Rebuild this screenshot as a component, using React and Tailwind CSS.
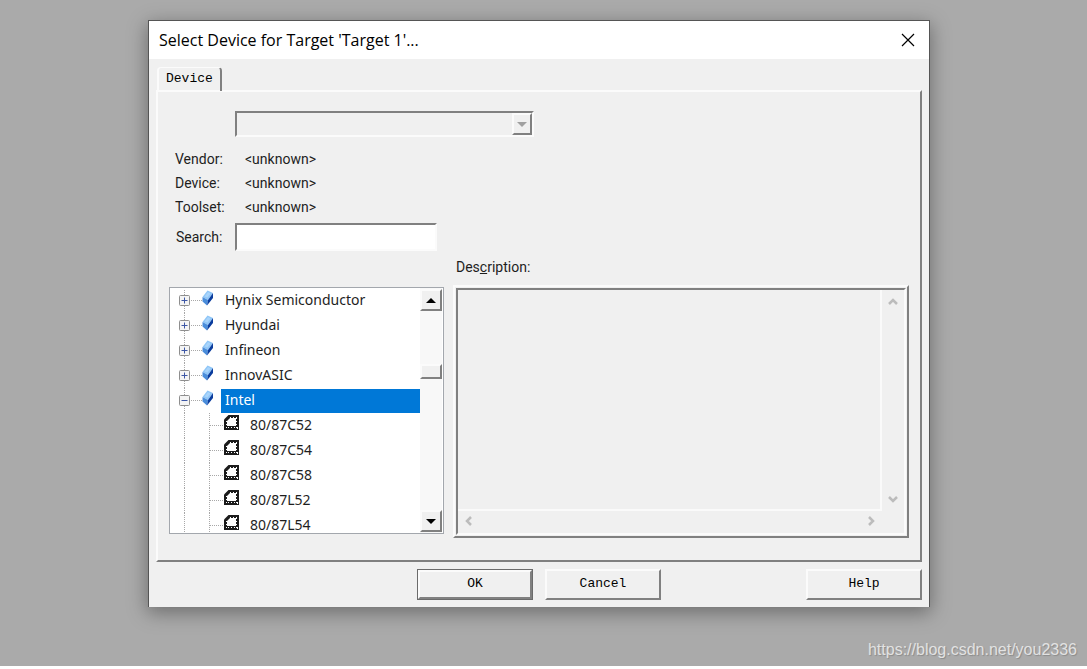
import React, { useState } from "react";

const vendors = [
  { name: "Hynix Semiconductor" },
  { name: "Hyundai" },
  { name: "Infineon" },
  { name: "InnovASIC" },
  { name: "Intel", devices: ["80/87C52", "80/87C54", "80/87C58", "80/87L52", "80/87L54"] },
];

const info = [
  { label: "Vendor:", value: "<unknown>" },
  { label: "Device:", value: "<unknown>" },
  { label: "Toolset:", value: "<unknown>" },
];

const raised =
  "border-2 border-t-[#fbfbfb] border-l-[#fbfbfb] border-r-[#808080] border-b-[#808080]";
const sunken =
  "border-2 border-t-[#808080] border-l-[#808080] border-r-[#fbfbfb] border-b-[#fbfbfb]";

const VendorGutter = ({ first, open }) => (
  <svg width="51" height="25" className="shrink-0" aria-hidden="true">
    <g stroke="#a8a8a8" strokeDasharray="1 1" shapeRendering="crispEdges">
      <path d={first ? "M14.5 2V25" : "M14.5 0V25"} />
      <path d="M21 12.5H32" />
    </g>
    <rect x="9.5" y="7.5" width="10" height="10" rx="1" fill="#f4f4f4" stroke="#8e8e8e" />
    <path d={open ? "M11.5 12.5H17.5" : "M11.5 12.5H17.5M14.5 9.5V15.5"} stroke="#3c56a5" />
    {/* blue component block */}
    <path d="M32.5 9L37.5 2.5L43 5L38 12Z" fill="#8fc6f7" />
    <path d="M32.5 9L38 12L37 17.5L32.5 13.5Z" fill="#4a8ddb" />
    <path d="M43 5V10L37 17.5L38 12Z" fill="#0b3d9e" />
    <path d="M34.5 8.5L38 4L40.5 5.5L37.5 9.5Z" fill="#a9d4fb" />
  </svg>
);

const DeviceGutter = () => (
  <svg width="76" height="25" className="shrink-0" aria-hidden="true">
    <g stroke="#a8a8a8" strokeDasharray="1 1" shapeRendering="crispEdges">
      <path d="M14.5 0V25" />
      <path d="M39.5 0V25" />
      <path d="M40 12.5H53" />
    </g>
    {/* PLCC chip with pins */}
    <path d="M58.5 2H69V17H54V6.5Z" fill="#1c1c1c" />
    <path d="M60 5H66V13H57V8Z" fill="#fff" />
    <g stroke="#fff" strokeDasharray="1 2" shapeRendering="crispEdges">
      <path d="M60 4.5H68" />
      <path d="M58 14.5H68" />
      <path d="M56.5 8V15" />
      <path d="M66.5 5V15" />
    </g>
    <path d="M67 15H68V16H67Z" fill="#fff" />
  </svg>
);

const Arrow = ({ up, color = "#000" }) => (
  <svg width="10" height="5" aria-hidden="true">
    <path d={up ? "M0 5L5 0L10 5Z" : "M0 0H10L5 5Z"} fill={color} />
  </svg>
);

const Chevron = ({ d }) => (
  <svg width="10" height="10" aria-hidden="true">
    <path d={d} fill="none" stroke="#bcbcbc" strokeWidth="2.5" />
  </svg>
);

const DeviceTree = () => {
  const [selected, setSelected] = useState("Intel");
  const [open, setOpen] = useState(true);

  const itemClass = (name) =>
    `mt-px h-6 flex-1 pl-1 pb-0.5 text-left leading-[22px] ${
      selected === name ? "bg-[#0078d7] text-white" : "text-[#1e1e1e]"
    }`;

  return (
    <div className="flex h-[247px] border border-[#a3a7ad] bg-white pr-px font-['Noto_Sans','Open_Sans',sans-serif] text-[14px]">
      <ul className="min-w-0 flex-1 overflow-hidden">
        {vendors.map((vendor, i) => (
          <li key={vendor.name}>
            <div className="flex h-[25px]">
              <VendorGutter first={i === 0} open={vendor.devices && open} />
              <button
                type="button"
                className={itemClass(vendor.name)}
                onClick={() => setSelected(vendor.name)}
                onDoubleClick={() => vendor.devices && setOpen(!open)}
              >
                {vendor.name}
              </button>
            </div>
            {vendor.devices && open && (
              <ul>
                {vendor.devices.map((device) => (
                  <li key={device} className="flex h-[25px]">
                    <DeviceGutter />
                    <button
                      type="button"
                      className={itemClass(device)}
                      onClick={() => setSelected(device)}
                    >
                      {device}
                    </button>
                  </li>
                ))}
              </ul>
            )}
          </li>
        ))}
      </ul>
      <div className="flex w-[22px] flex-col bg-[#f8f8f8] py-px">
        <button type="button" aria-label="Scroll up" className={`flex h-[22px] items-center justify-center bg-[#f0f0f0] ${raised}`}>
          <Arrow up />
        </button>
        <div className="h-[53px]" />
        <div className={`h-[15px] bg-[#f0f0f0] ${raised}`} />
        <button type="button" aria-label="Scroll down" className={`mt-auto flex h-[22px] items-center justify-center bg-[#f0f0f0] ${raised}`}>
          <Arrow />
        </button>
      </div>
    </div>
  );
};

const DialogButton = ({ children, isDefault }) => (
  <button
    type="button"
    className={`h-[31px] w-[116px] font-['Liberation_Mono',monospace] text-[13px] text-black ${
      isDefault ? "border border-[#6b6b6b]" : ""
    }`}
  >
    <span className={`flex h-full items-center justify-center pb-px ${raised}`}>{children}</span>
  </button>
);

const App = () => {
  const [search, setSearch] = useState("");

  return (
    <div className="flex min-h-screen flex-col border-b-[3px] border-white bg-[#aaaaaa] pt-5 font-['Roboto','Liberation_Sans',sans-serif] text-[14px] text-[#1e1e1e]">
      <div
        role="dialog"
        aria-labelledby="dialog-title"
        className="mr-[157px] ml-[148px] border border-b-0 border-[#555555] bg-[#f0f0f0] shadow-[0_5px_18px_1px_rgba(0,0,0,0.35)]"
      >
        <div className="flex h-[38px] items-center justify-between bg-white pr-[14px] pb-px pl-[10px]">
          <h1 id="dialog-title" className="font-['Open_Sans','Noto_Sans',sans-serif] text-[16px] text-black">
            Select Device for Target 'Target 1'...
          </h1>
          <button type="button" aria-label="Close">
            <svg width="14" height="14" aria-hidden="true">
              <path d="M1 1L13 13M13 1L1 13" stroke="#000" strokeWidth="1.2" />
            </svg>
          </button>
        </div>

        <div className="px-[7px] pt-2 pb-[7px]">
          <div role="tablist" className="flex">
            <button
              type="button"
              role="tab"
              aria-selected="true"
              className="ml-px h-6 rounded-t-sm border-t border-r-2 border-l-2 border-t-[#fbfbfb] border-r-[#808080] border-l-[#fbfbfb] px-[7px] pb-0.5 font-['Liberation_Mono',monospace] text-[13px] text-black"
            >
              Device
            </button>
          </div>

          <div role="tabpanel" className={`-mt-px px-[11px] pt-[19px] pb-[22px] ${raised}`}>
            <div className="pl-[66px]">
              <div className={`flex h-[26px] w-[299px] ${sunken} border-r-[#808080]`}>
                <select disabled aria-label="Device database" className="min-w-0 flex-1 appearance-none bg-[#f0f0f0]" />
                <span className={`flex w-[20px] items-center justify-center ${raised}`}>
                  <Arrow color="#a0a0a0" />
                </span>
              </div>
            </div>

            <dl className="mt-[10px] pl-[6px]">
              {info.map((row) => (
                <div key={row.label} className="flex h-6 items-center">
                  <dt className="w-[70px]">{row.label}</dt>
                  <dd>{row.value}</dd>
                </div>
              ))}
            </dl>

            <div className="mt-1 flex items-center pl-[7px]">
              <label htmlFor="search" className="w-[59px]">
                Search:
              </label>
              <input
                id="search"
                type="text"
                value={search}
                onChange={(e) => setSearch(e.target.value)}
                className={`h-7 w-[202px] bg-white px-1 outline-none ${sunken}`}
              />
            </div>

            <div className="mt-[6px] flex gap-[9px]">
              <div className="w-[275px] shrink-0 pt-[30px]">
                <DeviceTree />
              </div>

              <div className="min-w-0 flex-1">
                <label htmlFor="description" className="block h-[28px] pl-[3px] leading-5">
                  Des<u>c</u>ription:
                </label>
                <div className={`p-px ${raised}`}>
                  <div className={`grid h-[247px] grid-cols-[1fr_22px] grid-rows-[1fr_22px] ${sunken}`}>
                    <textarea
                      id="description"
                      readOnly
                      className="resize-none border-r-2 border-b-2 border-[#fafafa] bg-transparent outline-none"
                    />
                    <div className="flex flex-col items-center justify-between py-[7px]">
                      <Chevron d="M1 7L5 3L9 7" />
                      <Chevron d="M1 3L5 7L9 3" />
                    </div>
                    <div className="flex items-center justify-between px-[6px] pb-[3px]">
                      <Chevron d="M7 1L3 5L7 9" />
                      <Chevron d="M3 1L7 5L3 9" />
                    </div>
                  </div>
                </div>
              </div>
            </div>
          </div>

          <div className="mt-[7px] flex gap-3 pl-[261px]">
            <DialogButton isDefault>OK</DialogButton>
            <DialogButton>Cancel</DialogButton>
            <div className="ml-auto">
              <DialogButton>Help</DialogButton>
            </div>
          </div>
        </div>
      </div>

      <p className="mt-auto pr-[10px] pb-1 text-right font-['Liberation_Sans',sans-serif] text-[16px] leading-6 text-[#e2e2e2] [text-shadow:1px_1px_1px_#8a8a8a]">
        https://blog.csdn.net/you2336
      </p>
    </div>
  );
};

export default App;
